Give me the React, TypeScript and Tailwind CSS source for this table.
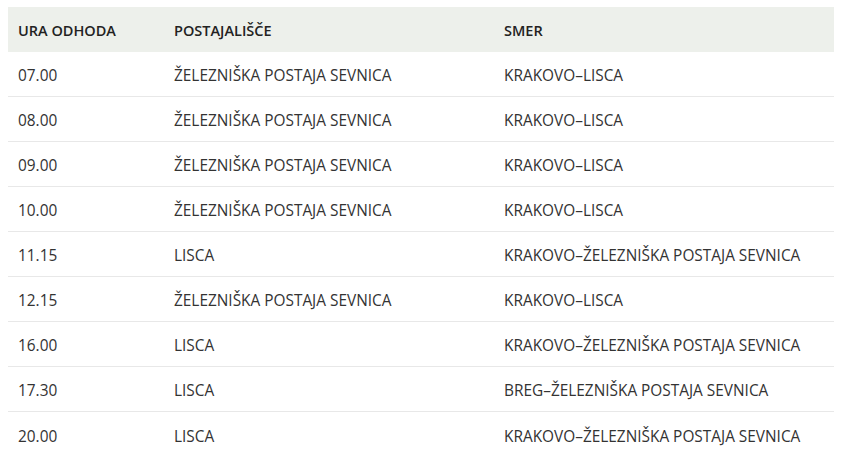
const rows = [
    ["07.00", "ŽELEZNIŠKA POSTAJA SEVNICA", "KRAKOVO–LISCA"],
    ["08.00", "ŽELEZNIŠKA POSTAJA SEVNICA", "KRAKOVO–LISCA"],
    ["09.00", "ŽELEZNIŠKA POSTAJA SEVNICA", "KRAKOVO–LISCA"],
    ["10.00", "ŽELEZNIŠKA POSTAJA SEVNICA", "KRAKOVO–LISCA"],
    ["11.15", "LISCA", "KRAKOVO–ŽELEZNIŠKA POSTAJA SEVNICA"],
    ["12.15", "ŽELEZNIŠKA POSTAJA SEVNICA", "KRAKOVO–LISCA"],
    ["16.00", "LISCA", "KRAKOVO–ŽELEZNIŠKA POSTAJA SEVNICA"],
    ["17.30", "LISCA", "BREG–ŽELEZNIŠKA POSTAJA SEVNICA"],
    ["20.00", "LISCA", "KRAKOVO–ŽELEZNIŠKA POSTAJA SEVNICA"],
];

export default function App() {
    return (
        <div className="bg-white pt-[7px] px-2 font-['Open_Sans',sans-serif] text-[15.4px] text-[#333]">
            {/* Header */}
            <div className="grid grid-cols-[156px_330px_1fr] h-[45px] pt-[2px] items-center bg-[#edf0eb] font-semibold text-[14.5px] text-[#222]">
                <div className="pl-[10px]">URA ODHODA</div>
                <div className="pl-[10px]">POSTAJALIŠČE</div>
                <div className="pl-[10px]">SMER</div>
            </div>

            {/* Rows */}
            {rows.map((r, i) => (
                <div
                    key={i}
                    className={
                        "grid grid-cols-[156px_330px_1fr] h-[45px] pt-[4px] items-center" +
                        (i < rows.length - 1 ? " border-b border-[#e8e8e8]" : "")
                    }
                >
                    <div className="pl-[10px]">{r[0]}</div>
                    <div className="pl-[10px]">{r[1]}</div>
                    <div className="pl-[10px]">{r[2]}</div>
                </div>
            ))}
        </div>
    );
}
